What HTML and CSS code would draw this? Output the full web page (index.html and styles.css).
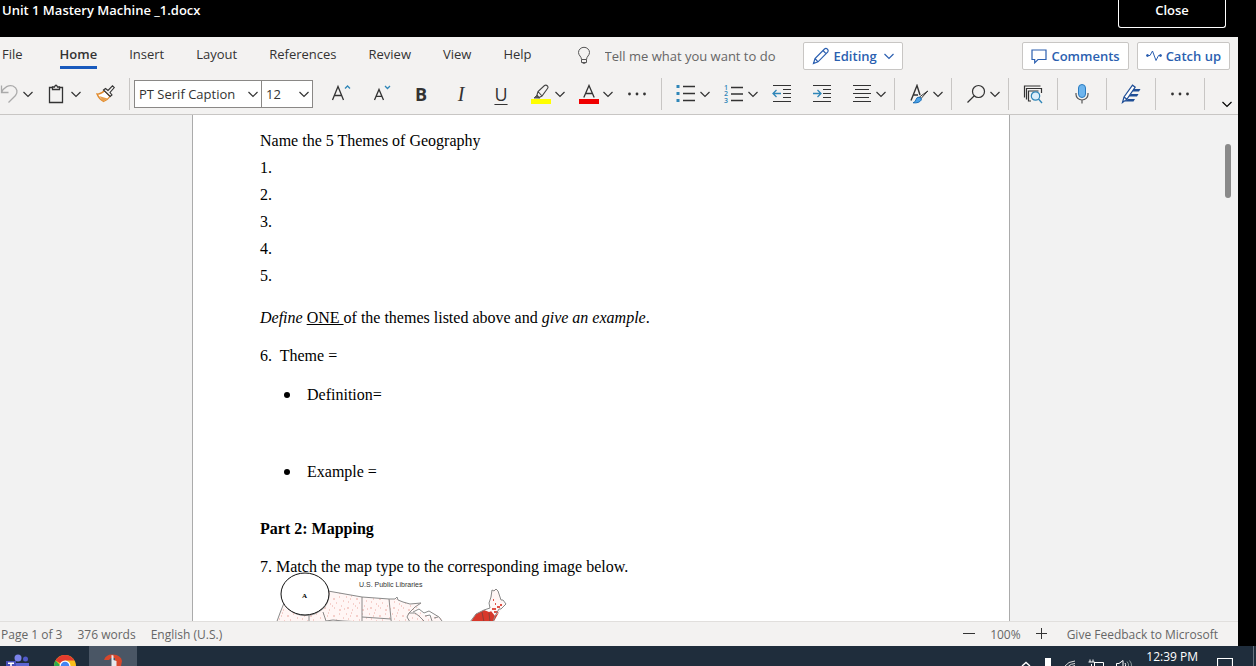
FILE: index.html
```html
<!DOCTYPE html>
<html lang="en">
  <head>
    <meta charset="utf-8">
    <title>Unit 1 Mastery Machine _1.docx</title>
    <link rel="stylesheet" href="styles.css">
  </head>
  <body>
    <!-- shared icon shapes -->
    <svg class="defs" width="0" height="0">
      <symbol id="chev" viewBox="0 0 10 20"><path d="M0.5 8 L5 12.5 L9.5 8" fill="none" stroke="currentColor" stroke-width="1.2"/></symbol>
      <symbol id="dots" viewBox="0 0 20 20"><g fill="#333"><circle cx="2.5" cy="10" r="1.4"/><circle cx="10" cy="10" r="1.4"/><circle cx="17.5" cy="10" r="1.4"/></g></symbol>
    </svg>

    <header class="titlebar">
      <h1>Unit 1 Mastery Machine _1.docx</h1>
      <button class="close">Close</button>
    </header>

    <main class="app">
      <div class="tabrow">
        <nav class="tabs">
          <a href="#" class="file">File</a>
          <a href="#" class="active">Home</a>
          <a href="#">Insert</a>
          <a href="#">Layout</a>
          <a href="#">References</a>
          <a href="#">Review</a>
          <a href="#">View</a>
          <a href="#">Help</a>
        </nav>
        <label class="tellme">
          <svg width="14" height="20" viewBox="0 0 14 20" fill="none" stroke="#555"><path d="M4.5 13.5 C4.5 10.5 1.5 9.5 1.5 6.5 A5.5 5.2 0 0 1 12.5 6.5 C12.5 9.5 9.5 10.5 9.5 13.5 Z M4.5 13.5 V16.5 H9.5 V13.5 M5 16.5 Q7 18.5 9 16.5"/></svg>
          <input type="text" placeholder="Tell me what you want to do">
        </label>
        <button class="pill editing">
          <svg width="18" height="18" viewBox="0 0 18 18" fill="none" stroke="#2b5fb0" stroke-width="1.2"><path d="M1.5 16.5 L3 11.5 L12.5 2 Q14 0.8 15.4 2.2 Q16.8 3.8 15.6 5.2 L6 14.8 Z M11 3.5 L14 6.6 M3 11.5 L6 14.8"/></svg>
          Editing
          <svg width="10" height="20"><use href="#chev"/></svg>
        </button>
        <div class="actions">
          <button class="pill">
            <svg width="16" height="16" viewBox="0 0 16 16" fill="none" stroke="#2b5fb0" stroke-width="1.2"><path d="M1 2 H15 V11.5 H7 L3.7 14.8 V11.5 H1 Z"/></svg>
            Comments
          </button>
          <button class="pill">
            <svg width="16" height="16" viewBox="0 0 16 16" fill="none" stroke="#2b5fb0"><path d="M1.5 7.5 H4 L6.5 3 L10 12.5 L12.5 7.5 H14.5"/><circle cx="1.5" cy="7.5" r="1" fill="#2b5fb0"/><circle cx="14.5" cy="7.5" r="1" fill="#2b5fb0"/></svg>
            Catch up
          </button>
        </div>
      </div>

      <div class="toolbar">
        <button class="tool first" aria-label="Undo">
          <svg width="20" height="20" viewBox="0 0 20 20" fill="none" stroke="#aaa" stroke-width="1.3"><path d="M2.5 1.5 V8.5 H9.5 M2.5 8.5 C5 3 10 0.5 14 2 C18.5 4 19 8.5 16.5 11.5 L9.5 18.5"/></svg>
          <svg width="10" height="20"><use href="#chev"/></svg>
        </button>
        <button class="tool" aria-label="Paste">
          <svg width="20" height="20" viewBox="0 0 20 20" fill="none" stroke="#333" stroke-width="1.3"><path d="M6 3.5 H2.5 V18.5 H15.5 V3.5 H12"/><path d="M5.5 5.5 V3 H7.5 Q9 -0.5 10.5 3 H12.5 V5.5 Z"/></svg>
          <svg width="10" height="20"><use href="#chev"/></svg>
        </button>
        <button class="tool" aria-label="Format painter">
          <svg width="20" height="20" viewBox="0 0 20 20"><path d="M2 10 Q6 10.5 9.5 6.5 L15 12.5 Q13 15.5 8.5 17.5 Q4 15 2 10 Z" fill="#fff" stroke="#e08a2c" stroke-width="1.3"/><path d="M4 12 L12.5 14.5 L8.5 17.5 Z" fill="#e9a04c"/><path d="M8.5 6 L10.5 4.5 L13 6.5 L17.5 1.8 L19.3 3.5 L15 8.5 L17 11 L15.2 12.5 Z" fill="#f3f2f1" stroke="#333" stroke-width="1.1"/></svg>
        </button>
        <span class="sep"></span>
        <div class="fontbox">
          <label class="combo family">
            <select aria-label="Font"><option>PT Serif Caption</option></select>
            <svg width="10" height="20"><use href="#chev"/></svg>
          </label>
          <label class="combo size">
            <select aria-label="Font size"><option>12</option></select>
            <svg width="10" height="20"><use href="#chev"/></svg>
          </label>
        </div>
        <button class="tool" aria-label="Grow font">
          <svg width="20" height="20" viewBox="0 0 20 20" fill="none" stroke="#333" stroke-width="1.3"><path d="M1.5 16 L7 2.5 L12.5 16 M3.5 11.5 H10.5"/><path d="M14 4.5 L16.5 2 L19 4.5" stroke="#2f86b8"/></svg>
        </button>
        <button class="tool" aria-label="Shrink font">
          <svg width="20" height="20" viewBox="0 0 20 20" fill="none" stroke="#333" stroke-width="1.3"><path d="M3.5 16 L8 5.5 L12.5 16 M5.2 12.3 H10.8"/><path d="M14 2 L16.5 4.5 L19 2" stroke="#2f86b8"/></svg>
        </button>
        <button class="tool letter bold">B</button>
        <button class="tool letter italic">I</button>
        <button class="tool letter underline">U</button>
        <button class="tool" aria-label="Highlight">
          <svg width="20" height="20" viewBox="0 0 20 20"><path d="M0 15 H20 V20 H0 Z" fill="#ff0"/><path d="M3 14 L6 11 L9 14 Z" fill="#555" stroke="#555"/><path d="M6 11 L7 7.5 L13.5 1.5 Q15 0.5 16.5 2 Q17.5 3.3 16.5 4.5 L11 12 L8 13.5 Z M7 7.5 L11 12" fill="#f3f2f1" stroke="#444" stroke-width="1.1"/></svg>
          <svg width="10" height="20"><use href="#chev"/></svg>
        </button>
        <button class="tool" aria-label="Font color">
          <svg width="20" height="20" viewBox="0 0 20 20"><path d="M0 15 H20 V20 H0 Z" fill="#f00000"/><path d="M4.8 13.5 L10 1.5 L15.2 13.5 M6.7 9.5 H13.3" fill="none" stroke="#333" stroke-width="1.3"/></svg>
          <svg width="10" height="20"><use href="#chev"/></svg>
        </button>
        <button class="tool" aria-label="More font options"><svg width="20" height="20"><use href="#dots"/></svg></button>
        <span class="sep"></span>
        <button class="tool" aria-label="Bullets">
          <svg width="20" height="20" viewBox="0 0 20 20"><path d="M7 2.5 H19 M7 9.5 H19 M7 16.5 H19" stroke="#333" stroke-width="1.3"/><path d="M0.5 1 H3.5 V4 H0.5 Z M0.5 8 H3.5 V11 H0.5 Z M0.5 15 H3.5 V18 H0.5 Z" fill="#2f86b8"/></svg>
          <svg width="10" height="20"><use href="#chev"/></svg>
        </button>
        <button class="tool" aria-label="Numbering">
          <svg class="numbering" width="20" height="20" viewBox="0 0 20 20"><path d="M7 3.5 H19 M7 10 H19 M7 16.5 H19" stroke="#333" stroke-width="1.3"/><g class="nums"><text x="0" y="6">1</text><text x="0" y="12">2</text><text x="0" y="19">3</text></g></svg>
          <svg width="10" height="20"><use href="#chev"/></svg>
        </button>
        <button class="tool" aria-label="Decrease indent">
          <svg width="20" height="20" viewBox="0 0 20 20" fill="none"><path d="M1 1.5 H19 M11 5.5 H19 M11 9.5 H19 M11 13.5 H19 M1 17.5 H19" stroke="#333" stroke-width="1.2"/><path d="M1 9.5 H9 M4.5 6 L1 9.5 L4.5 13" stroke="#2f86b8" stroke-width="1.3"/></svg>
        </button>
        <button class="tool" aria-label="Increase indent">
          <svg width="20" height="20" viewBox="0 0 20 20" fill="none"><path d="M1 1.5 H19 M11 5.5 H19 M11 9.5 H19 M11 13.5 H19 M1 17.5 H19" stroke="#333" stroke-width="1.2"/><path d="M1 9.5 H9 M5.5 6 L9 9.5 L5.5 13" stroke="#2f86b8" stroke-width="1.3"/></svg>
        </button>
        <button class="tool" aria-label="Alignment">
          <svg width="20" height="20" viewBox="0 0 20 20"><path d="M1 1.5 H19 M3 5.5 H17 M1 9.5 H19 M3 13.5 H17 M1 17.5 H19" stroke="#333" stroke-width="1.2"/></svg>
          <svg width="10" height="20"><use href="#chev"/></svg>
        </button>
        <span class="sep"></span>
        <button class="tool" aria-label="Styles">
          <svg width="20" height="20" viewBox="0 0 20 20" fill="none"><path d="M2 16.5 L8 1.5 L11 11 M4.5 11 H9" stroke="#333" stroke-width="1.4"/><path d="M18.8 7 L12 14.5 L10.5 13 Z" fill="#fff" stroke="#333"/><path d="M10 13.2 Q13 13.5 12.3 16 Q10 19.5 4 18.8 Q7 17.8 7 15.5 Q7.8 13 10 13.2 Z" fill="#4da3e8" stroke="#1c70b8"/></svg>
          <svg width="10" height="20"><use href="#chev"/></svg>
        </button>
        <span class="sep"></span>
        <button class="tool" aria-label="Find">
          <svg width="20" height="20" viewBox="0 0 20 20" fill="none" stroke="#333" stroke-width="1.2"><circle cx="12.5" cy="7.5" r="6"/><path d="M8.3 11.8 L1.5 18.5"/></svg>
          <svg width="10" height="20"><use href="#chev"/></svg>
        </button>
        <span class="sep"></span>
        <button class="tool" aria-label="Reuse files">
          <svg width="20" height="20" viewBox="0 0 20 20" fill="none"><path d="M1.5 13.5 V2 H17.5 M3.5 15.5 V4.5 H18.5 V9 M8 17 H5.5 V7 H15.5" stroke="#333" stroke-width="1.2"/><circle cx="12.5" cy="12" r="4.2" fill="#dceefa" stroke="#2f86b8" stroke-width="1.2"/><path d="M15.5 15 L19 19" stroke="#2f86b8" stroke-width="1.4"/></svg>
        </button>
        <span class="sep"></span>
        <button class="tool" aria-label="Dictate">
          <svg width="20" height="20" viewBox="0 0 20 20" fill="none"><rect x="6.5" y="0.5" width="7" height="13" rx="3.5" fill="#6db5ee" stroke="#2b7cc0"/><path d="M4 9 V10.5 A6 5.5 0 0 0 16 10.5 V9 M10 16 V19.5" stroke="#555" stroke-width="1.2"/></svg>
        </button>
        <span class="sep"></span>
        <button class="tool" aria-label="Editor">
          <svg width="20" height="20" viewBox="0 0 20 20"><path d="M12 5 H19.5 L18 7.5 H10.5 Z M9.5 10 H17.5 L16 12.5 H8 Z M7 15 H14 L12.5 17.5 H3.5 Z" fill="#1f4e96"/><path d="M1.5 18.5 L3 13 L11.5 1.2 L14.2 3.2 L6 15.2 Z M3 13 L6 15.2" fill="#fff" stroke="#1f4e96" stroke-width="1.2"/></svg>
        </button>
        <span class="sep"></span>
        <button class="tool" aria-label="More options"><svg width="20" height="20"><use href="#dots"/></svg></button>
        <span class="sep"></span>
        <button class="expand" aria-label="Ribbon options"><svg width="10" height="20"><use href="#chev"/></svg></button>
      </div>

      <section class="canvas">
        <article class="page">
          <p class="line">Name the 5 Themes of Geography</p>
          <p class="line">1.</p>
          <p class="line">2.</p>
          <p class="line">3.</p>
          <p class="line">4.</p>
          <p class="line">5.</p>
          <p class="task"><i>Define</i> <u>ONE </u>of the themes listed above and <i>give an example</i>.</p>
          <p class="para">6.&nbsp; Theme =</p>
          <ul>
            <li>Definition=</li>
            <li>Example =</li>
          </ul>
          <h2>Part 2: Mapping</h2>
          <p class="para">7. Match the map type to the corresponding image below.</p>
          <svg class="map" width="250" height="100" viewBox="275 572 250 100">
            <defs>
              <pattern id="specks" width="23" height="17" patternUnits="userSpaceOnUse">
                <path d="M1 2h1M6 1h1M11 4h2M17 2h1M21 6h1M3 7h1M8 9h1M14 8h1M19 11h1M2 13h2M7 15h1M12 13h1M17 15h2M22 14h1M10 11h1M5 4h1" stroke="#eba8a0" stroke-width="1"/>
              </pattern>
            </defs>
            <path d="M284 603 L280 613 L276 624 V672 H442 V619 L436 615 L428 617 L420 612 L411 613 L418 607 L422 603 L410 604 L403 602 L396 599 L389 599 L362 597 L328 591 Z" fill="#fff6f5"/>
            <path d="M284 603 L280 613 L276 624 V672 H442 V619 L436 615 L428 617 L420 612 L411 613 L418 607 L422 603 L410 604 L403 602 L396 599 L389 599 L362 597 L328 591 Z" fill="url(#specks)"/>
            <path d="M284 603 L280 613 L276 624 M328 591 L362 597 L389 599 L395 599 L397 597 L398 600 L403 602 L410 604 L421 603 L415 607 L409 613 L407 617 L410 622 M409 613 L415 613 L419 616 L424 621 M413 612 L419 609 L424 613 L429 611 L434 614 L439 617 L442 621 M425 616 L430 615 L432 621 M434 618 L438 617 M362 597 V640 M389 599 L391 619 L393 640 M362 617 L391 619 M309 614 V640 M323 612 L326 621 L333 620 L343 621 L362 622" fill="none" stroke="#8a8a8a"/>
            <path d="M470 623 L476 614 L484 610 L489 612 L497 609 L502 606 L498 614 L493 623 Z" fill="#d8382b"/>
            <path d="M482 612 L484 622 M489 613 L490 622" stroke="#8e3f38"/>
            <path d="M490 608 L490 597 L492 590 L495 589 L498 591 L501 600 L506 604 L501 610 L495 616 L491 611 Z" fill="#fff6f5"/>
            <path d="M492 609h4M494 612h4M497 607h3M500 605h2M495 604h1M493 600h1" stroke="#df5348" stroke-width="2"/>
            <path d="M470 622 L476 614 L484 610 L490 608 L489 603 L491 597 L492 590 L494 591 L496 589 L498 591 L501 600 L503 600 L506 604 L501 609 L499 609 L495 616 L493 622" fill="none" stroke="#888"/>
            <text class="maptitle" x="359" y="587">U.S. Public Libraries</text>
            <ellipse cx="305.5" cy="595" rx="24" ry="21" fill="#aaa"/>
            <ellipse cx="305" cy="594" rx="24" ry="21" fill="#fff" stroke="#111"/>
            <text class="mapletter" x="302" y="598">A</text>
          </svg>
        </article>
        <div class="thumb"></div>
      </section>

      <footer class="status">
        <span>Page 1 of 3</span>
        <span>376 words</span>
        <span>English (U.S.)</span>
        <div class="zoom">
          <button aria-label="Zoom out"><svg width="12" height="12"><path d="M0 5.5 H12" stroke="#333"/></svg></button>
          <span>100%</span>
          <button aria-label="Zoom in"><svg width="12" height="12"><path d="M0 5.5 H11 M5.5 0 V11" stroke="#333"/></svg></button>
        </div>
        <a href="#">Give Feedback to Microsoft</a>
      </footer>
    </main>

    <footer class="taskbar">
      <div class="apps">
        <button aria-label="Teams">
          <svg width="24" height="20" viewBox="0 0 24 20"><circle cx="13" cy="12" r="3.5" fill="#7b83eb"/><circle cx="20.5" cy="13" r="2.5" fill="#5059c9"/><path d="M8 17 H24 V20 H8 Z" fill="#5b64d0"/><path d="M1 15 H11 V20 H1 Z" fill="#464eb8"/><path d="M3 17.2 H9 M6 17 V20" stroke="#fff" stroke-width="1.6"/></svg>
        </button>
        <button aria-label="Chrome">
          <svg width="24" height="20" viewBox="0 0 24 20"><circle cx="12" cy="20" r="11" fill="#f9bf1c"/><path d="M12 20 L2.5 14.5 A11 11 0 0 1 21.5 14.5 H12 Z" fill="#e33b2e"/><path d="M2.5 14.5 A11 11 0 0 0 1 20 H8 Z" fill="#2da94f"/><circle cx="12" cy="20" r="5.5" fill="#fff"/><circle cx="12" cy="20" r="4.3" fill="#4285f4"/></svg>
        </button>
        <button class="current" aria-label="Browser">
          <svg width="24" height="20" viewBox="0 0 24 20"><path d="M3 14 Q5 8 12 8.5 Q20 9 21 15 L20 20 H14 V12 H10 L8 14 Z" fill="#d9472b"/><path d="M10.5 9 L12.5 9.5 V14 L15.5 15 V20 H10.5 Z" fill="#e6e9ee"/></svg>
        </button>
      </div>
      <div class="tray">
        <svg width="12" height="20" viewBox="0 0 12 20"><path d="M2 20 L6 16.5 L10 20" fill="none" stroke="#fff" stroke-width="1.4"/></svg>
        <svg width="8" height="20" viewBox="0 0 8 20"><path d="M1 12 H7 V20 H1 Z" fill="#fff"/></svg>
        <svg width="12" height="20" viewBox="0 0 12 20" fill="none" stroke="#ddd"><path d="M1 20 Q4 15.5 11 15 M4.5 20 Q7 17.8 11 17.5 M8 20.5 L11 19.5"/></svg>
        <svg width="16" height="20" viewBox="0 0 16 20" fill="none" stroke="#fff"><path d="M2 13.5 V16 M5 13.5 V16 M0.5 16 H6.5 V20 M7 16.5 H15.5 V20 M3.5 18 V20"/></svg>
        <svg width="16" height="20" viewBox="0 0 16 20" fill="none" stroke="#fff"><path d="M0.5 20 V17.5 H3 L7 14.5 V20 M9 17 Q10 18.5 9.5 20"/><path d="M11 15.5 Q13 18 12.5 20 M13.5 14.5 Q15.8 17 15.5 20" stroke="#899"/></svg>
        <time>12:39 PM</time>
        <svg class="notify" width="16" height="20" viewBox="0 0 16 20"><path d="M0.5 20 V12.5 H15.5 V20" fill="none" stroke="#fff" stroke-width="1.2"/></svg>
      </div>
      <button class="peek" aria-label="Show desktop"></button>
    </footer>
  </body>
</html>
```
FILE: styles.css
```css
* {
  box-sizing: border-box;
}
body {
  margin: 0;
  height: 100vh;
  display: flex;
  flex-direction: column;
  overflow: hidden;
  background: #000;
  color: #333;
  font-family: "Open Sans", "Noto Sans", sans-serif;
  font-size: 13px;
}
button, input, select {
  font: inherit;
  color: inherit;
  border: 0;
  padding: 0;
  background: none;
}
a {
  color: inherit;
  text-decoration: none;
}
svg {
  display: block;
  flex: none;
}
.defs {
  position: absolute;
}

/* title bar */
.titlebar {
  flex: none;
  height: 37px;
  padding: 0 30px 0 2px;
  display: flex;
  justify-content: space-between;
  align-items: flex-start;
  color: #fff;
}
.titlebar h1 {
  margin: 0;
  font-size: 13px;
  line-height: 20px;
  font-weight: 600;
}
.close {
  width: 108px;
  height: 28px;
  padding-bottom: 8px;
  border: 1px solid #fff;
  border-top: 0;
  border-radius: 0 0 3px 3px;
  font-weight: 600;
}

.app {
  flex: 1;
  min-height: 0;
  margin-right: 18px;
  display: flex;
  flex-direction: column;
  background: #f3f2f1;
}

/* tabs */
.tabrow {
  flex: none;
  height: 37px;
  padding-right: 8px;
  display: flex;
  align-items: center;
}
.tabs {
  display: flex;
  align-self: flex-start;
  gap: 32px;
  padding-left: 2px;
}
.tabs a {
  height: 32px;
  line-height: 34px;
  border-bottom: 3px solid transparent;
}
.tabs .file {
  margin-right: 5px;
}
.tabs .active {
  font-weight: 600;
  border-color: #185abd;
}
.tellme {
  display: flex;
  align-items: center;
  gap: 14px;
  margin-left: 45px;
}
.tellme input {
  width: 198px;
}
.tellme input::placeholder {
  color: #666;
  opacity: 1;
}
.pill {
  display: flex;
  align-items: center;
  gap: 4px;
  height: 28px;
  padding: 0 8px;
  background: #fff;
  border: 1px solid #c8c6c4;
  border-radius: 2px;
  color: #2b5fb0;
  font-weight: 600;
}
.editing svg:last-child {
  margin-left: 3px;
}
.actions {
  display: flex;
  gap: 8px;
  margin-left: auto;
}

/* toolbar */
.toolbar {
  flex: none;
  height: 41px;
  display: flex;
  align-items: center;
  border-bottom: 1px solid #c8c6c4;
}
.tool {
  flex: none;
  display: flex;
  align-items: center;
  gap: 4px;
  height: 32px;
  padding: 0 4px 0 10px;
}
.tool svg:only-child {
  margin-right: 6px;
}
.first {
  margin-left: -11px;
}
.sep {
  width: 1px;
  height: 32px;
  margin: 0 4px;
  background: #c8c6c4;
}
.letter {
  width: 40px;
  padding: 0;
  justify-content: center;
  font-size: 18px;
}
.bold {
  font-weight: 700;
}
.italic {
  font-family: "Liberation Serif", serif;
  font-style: italic;
  font-size: 20px;
}
.underline {
  text-decoration: underline;
  text-decoration-thickness: 1px;
  text-underline-offset: 3px;
}
.numbering {
  overflow: visible;
}
.nums {
  font-size: 7px;
  font-weight: 600;
  fill: #2f86b8;
}
.fontbox {
  display: flex;
  width: 179px;
  height: 28px;
  margin-right: 8px;
  border: 1px solid #8a8886;
  background: #fff;
}
.combo {
  position: relative;
  display: flex;
}
.combo select {
  width: 100%;
  padding-left: 4px;
  appearance: none;
}
.combo svg {
  position: absolute;
  right: 3px;
  top: 3px;
  pointer-events: none;
}
.family {
  flex: 1;
}
.size {
  width: 51px;
  border-left: 1px solid #8a8886;
}
.expand {
  align-self: flex-end;
  margin: 0 6px 0 auto;
  color: #000;
}

/* document */
.canvas {
  position: relative;
  flex: 1;
  min-height: 0;
  padding-right: 36px;
  display: flex;
  justify-content: center;
  overflow: hidden;
  background: #f2f2f2;
}
.page {
  width: 818px;
  padding: 12px 67px 0;
  border: 1px solid #ababab;
  border-width: 0 1px;
  background: #fff;
  color: #000;
  font-family: "Liberation Serif", serif;
  font-size: 16px;
  line-height: 27px;
}
.page p, .page h2 {
  margin: 0;
}
.page .task {
  margin: 15px 0 11px;
}
.page ul {
  margin: 12px 0 0;
  padding-left: 24px;
  list-style: none;
}
.page li {
  display: flex;
  align-items: center;
  gap: 17px;
  margin-bottom: 50px;
}
.page li::before {
  content: "";
  width: 6px;
  height: 6px;
  border-radius: 50%;
  background: #000;
}
.page li:last-child {
  margin-bottom: 30px;
}
.page h2 {
  margin-bottom: 11px;
  font-size: 16px;
}
.map {
  margin: -8px 0 0 15px;
}
.maptitle {
  font: 7px "Liberation Sans", sans-serif;
  fill: #333;
}
.mapletter {
  font: bold 7px "Liberation Serif", serif;
}
.thumb {
  position: absolute;
  top: 29px;
  right: 7px;
  width: 6px;
  height: 54px;
  border-radius: 3px;
  background: #8a8a8a;
}

/* status bar */
.status {
  flex: none;
  height: 25px;
  padding: 0 20px 0 1px;
  display: flex;
  align-items: center;
  gap: 15px;
  border-top: 1px solid #e1dfdd;
  font-size: 12px;
  color: #666;
}
.zoom {
  display: flex;
  align-items: center;
  gap: 15px;
  margin-left: auto;
  margin-right: 4px;
}

/* taskbar */
.taskbar {
  flex: none;
  height: 20px;
  display: flex;
  overflow: hidden;
  background: #1f2d3c;
  color: #fff;
}
.apps {
  display: flex;
  margin-left: -7px;
}
.apps button {
  width: 48px;
  height: 20px;
  display: flex;
  justify-content: center;
}
.apps .current {
  background: #4a5665;
}
.tray {
  display: flex;
  gap: 12px;
  margin-left: auto;
  padding-right: 20px;
}
.tray time {
  margin-left: 2px;
  font-size: 12px;
  line-height: 22px;
}
.notify {
  margin-left: 7px;
}
.peek {
  width: 3px;
  border-left: 1px solid #66717d;
}
```
